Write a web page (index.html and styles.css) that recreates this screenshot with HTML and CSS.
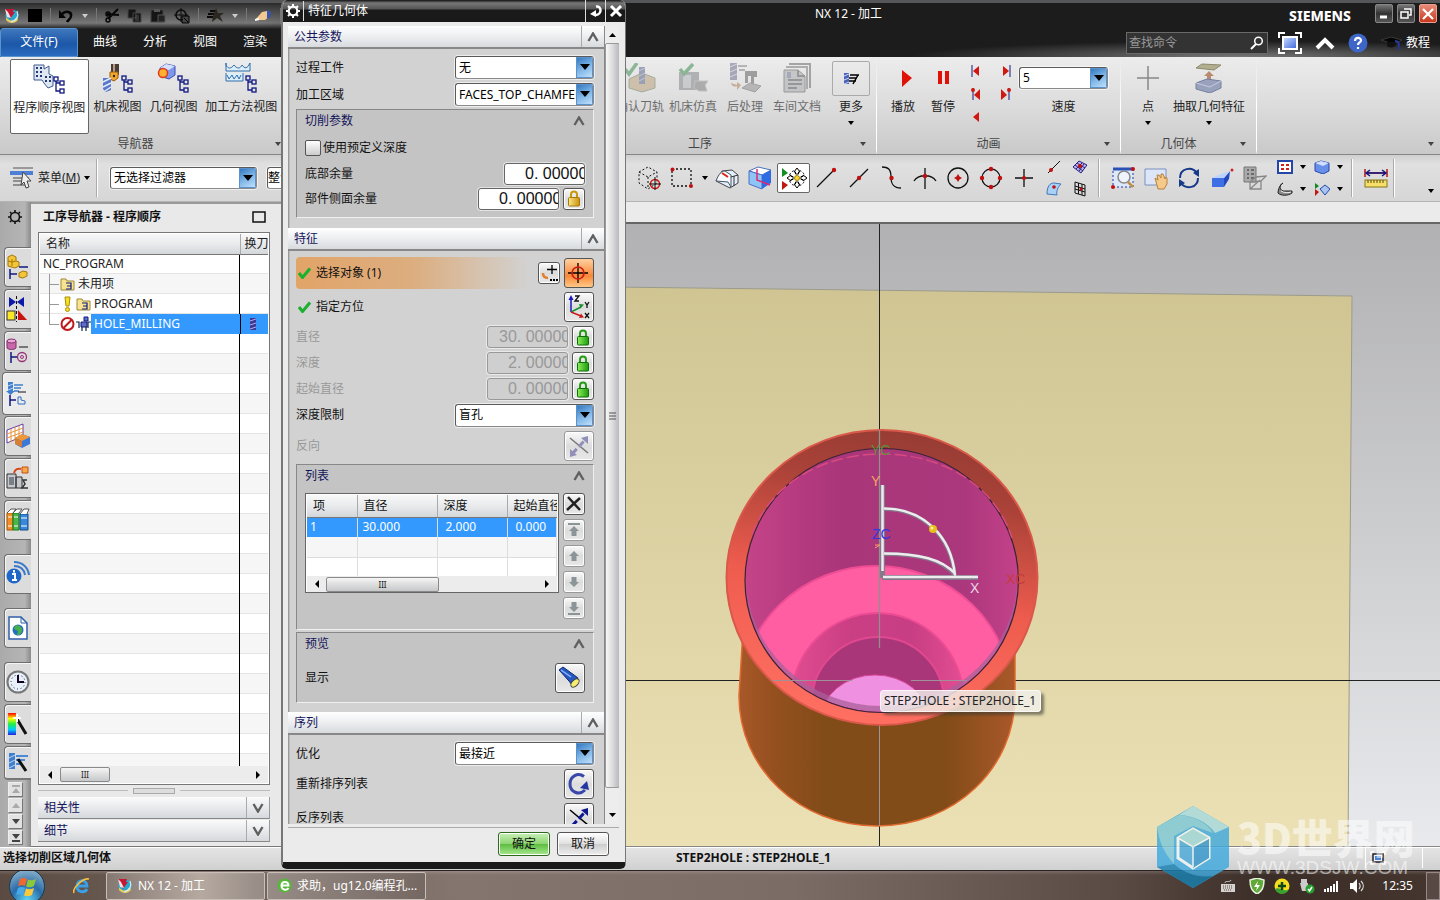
FILE: index.html
```html
<!DOCTYPE html>
<html lang="zh-CN">
<head>
<meta charset="utf-8">
<title>NX 12 - 加工</title>
<link rel="stylesheet" href="styles.css">
</head>
<body>
<svg class="defs" aria-hidden="true">
  <defs>
    <linearGradient id="gBlue" x1="0" y1="0" x2="1" y2="1"><stop offset="0" stop-color="#cfe2ff"/><stop offset="1" stop-color="#3a62d8"/></linearGradient>
    <linearGradient id="gGold" x1="0" y1="0" x2="1" y2="0"><stop offset="0" stop-color="#fbe68a"/><stop offset="1" stop-color="#c8920c"/></linearGradient>
    <linearGradient id="gGreen" x1="0" y1="0" x2="1" y2="0"><stop offset="0" stop-color="#8df05a"/><stop offset="1" stop-color="#1d9a10"/></linearGradient>
    <linearGradient id="gRainbow" x1="0" y1="0" x2="0" y2="1"><stop offset="0" stop-color="#f00"/><stop offset=".25" stop-color="#ff0"/><stop offset=".5" stop-color="#2e4"/><stop offset=".75" stop-color="#0cf"/><stop offset="1" stop-color="#22d"/></linearGradient>
    <symbol id="tree" viewBox="0 0 12 18"><g fill="none" stroke="#101880" stroke-width="1.300"><rect x="1" y="1" width="4" height="4"/><path d="M3 5v10h4M3 7h4"/><rect x="7" y="5" width="4" height="4"/><rect x="7" y="13" width="4" height="4"/></g></symbol>
    <symbol id="up" viewBox="0 0 12 10"><path d="M1.500 9L6 1.500 10.500 9" fill="none" stroke="#606060" stroke-width="2.400"/></symbol>
    <symbol id="dn" viewBox="0 0 12 10"><path d="M1.500 1L6 8.500 10.500 1" fill="none" stroke="#606060" stroke-width="2.400"/></symbol>
    <symbol id="caret" viewBox="0 0 6 4"><path d="M0 0h6L3 4z"/></symbol>
    <symbol id="lock" viewBox="0 0 14 17"><path d="M4 8V4.500a3 3 0 0 1 6 0V8" fill="none" stroke="currentColor" stroke-width="2"/><rect x="1.500" y="7.500" width="11" height="8.500" rx="1" fill="url(#gGold)" stroke="#a87808"/></symbol>
    <symbol id="glock" viewBox="0 0 14 17"><path d="M4 8V4.500a3 3 0 0 1 6 0V8" fill="none" stroke="#259b18" stroke-width="2"/><rect x="1.500" y="7.500" width="11" height="8.500" rx="1" fill="url(#gGreen)" stroke="#0e7008"/></symbol>
    <symbol id="check" viewBox="0 0 13 12"><path d="M1 6l3.500 4.500L12 1.500" fill="none" stroke="#1cb030" stroke-width="3"/></symbol>
    <symbol id="folder" viewBox="0 0 15 13"><path d="M1 3V1h5l1 2h7v9H1z" fill="#f6e490" stroke="#a08838"/><path d="M6 5h5v6H6M7 8h4" fill="none" stroke="#101880" stroke-width="1.200"/></symbol>
    <symbol id="nx" viewBox="0 0 17 17"><circle cx="9" cy="9" r="6.500" fill="#27a8cf"/><path d="M3 10c3 5 9 4 11 0l1 3c-3 4-9 4-12 0z" fill="#e8c95c"/><path d="M14 4c2 5 0 9-6 11" fill="none" stroke="#d8ecf4" stroke-width="1.200"/><path d="M2 2l9 0-1 3 2 0-5 7z" fill="#c31835"/><path d="M2 2l3 3 3 6-4-1z" fill="#f0e0e4"/></symbol>
    <symbol id="cross" viewBox="0 0 22 22"><path d="M11 1v20M1 11h20" stroke="#000" stroke-width="1.300"/><circle cx="11" cy="11" r="6" fill="none" stroke="#d01c10" stroke-width="1.700"/></symbol>
    <symbol id="arrowup" viewBox="0 0 12 12"><path d="M6 1l5 5H8.500v5h-5V6H1z" fill="#8b9598"/></symbol>
  </defs>
</svg>

<div class="app">
<header class="top">
  <div class="titlebar">
    <div class="qat">
      <svg width="17" height="17"><use href="#nx"/></svg>
      <svg width="14" height="14"><rect width="14" height="13" fill="#000"/></svg>
      <i></i>
      <svg width="15" height="14"><path d="M3 5c4-4 10-2 9 2 0 3-3 4-4 6" fill="none" stroke="#050505" stroke-width="2.500"/><path d="M0 1v8h7z" fill="#050505"/></svg>
      <svg class="lite" width="6" height="4"><use href="#caret"/></svg>
      <i></i>
      <svg width="14" height="15"><path d="M3 11L13 1M2 6l12 1" stroke="#060606" stroke-width="2"/><circle cx="3" cy="12" r="2" fill="none" stroke="#060606" stroke-width="1.500"/><circle cx="3" cy="6" r="2" fill="none" stroke="#060606" stroke-width="1.500"/></svg>
      <svg width="15" height="15"><path d="M1 1h8v9H1zM6 5h8v9H6z" fill="#151515" stroke="#444"/><path d="M8 8h4M8 10h4M8 12h4" stroke="#555"/></svg>
      <svg width="16" height="15"><rect x="1" y="2" width="12" height="12" fill="#151515" stroke="#444"/><path d="M4 1h6v3H4z" fill="#555"/><path d="M8 7h7v7H8z" fill="#222" stroke="#555"/></svg>
      <svg width="16" height="16"><circle cx="7" cy="7" r="5" fill="none" stroke="#0a0a0a" stroke-width="1.500"/><path d="M7 0v14M0 7h14" stroke="#0a0a0a"/><path d="M8 8h7v7H8z" fill="#444" stroke="#000"/><path d="M10 10l4 4" stroke="#000"/></svg>
      <i></i>
      <svg width="17" height="15"><path d="M3 3h7M1 6h7M0 9h6" stroke="#0a0a0a" stroke-width="2"/><path d="M9 0l2 5 6 0-4 3 3 6-6-4-5 4 1-6z" fill="#2a2820"/></svg>
      <svg class="lite" width="6" height="4"><use href="#caret"/></svg>
      <i></i>
      <svg width="17" height="12"><path d="M0 10l7-8 5-1 3 5-5 4z" fill="#f1c88d"/><path d="M12 0l4 2-1 6-3 0z" fill="#3456b0"/><path d="M0 10l4-1" stroke="#fff" stroke-width="2"/></svg>
      <i></i>
      <svg width="14" height="14"><path d="M0 1h14v12H0z" fill="#080808"/><path d="M4 4h6v6H4zM7 1v12" fill="none" stroke="#333"/></svg>
    </div>
    <h1>NX 12 - 加工</h1>
    <strong class="brand">SIEMENS</strong>
    <div class="winbtns">
      <button aria-label="最小化"><svg width="12" height="12"><path d="M2 9h7" stroke="#fff" stroke-width="3"/></svg></button>
      <button aria-label="还原"><svg width="12" height="12"><path d="M4 1h7v6H9M1 4h7v6H1z" fill="none" stroke="#fff" stroke-width="1.500"/></svg></button>
      <button class="close" aria-label="关闭"><svg width="12" height="12"><path d="M1 1l10 10M11 1L1 11" stroke="#fff" stroke-width="2.200"/></svg></button>
    </div>
  </div>
  <div class="tabrow">
    <nav><button class="file">文件(F)</button><button>曲线</button><button>分析</button><button>视图</button><button>渲染</button></nav>
    <div class="search"><input type="text" placeholder="查找命令" aria-label="查找命令"><svg width="14" height="14"><circle cx="8.500" cy="5" r="3.800" fill="none" stroke="#fff" stroke-width="1.500"/><path d="M6 8l-5 5" stroke="#fff" stroke-width="2"/></svg></div>
    <svg class="hi" width="24" height="22"><path d="M1 6V1h6M17 1h6v5M23 16v5h-6M7 21H1v-5" fill="none" stroke="#fff" stroke-width="2"/><rect x="5" y="5" width="14" height="12" fill="url(#gBlue)" stroke="#fff" stroke-width="2"/></svg>
    <svg class="hi" width="20" height="14"><path d="M2 12l8-8 8 8" fill="none" stroke="#fff" stroke-width="4"/></svg>
    <svg class="hi" width="20" height="20"><circle cx="10" cy="10" r="9.500" fill="#3e66c9"/><path d="M7 8c0-4 6-4 6-.5 0 2-3 2-3 4.500M10 14v2" fill="none" stroke="#fff" stroke-width="2.200"/></svg>
    <button class="tutor"><svg width="22" height="16"><path d="M0 5l10-3 11 3-9 4z" fill="#050505" stroke="#3a3a3a"/><path d="M6 7v4c2 2 7 2 9-1V7" fill="#111"/><path d="M14 6c4 0 5 3 3 9" fill="none" stroke="#23399a" stroke-width="2"/></svg>教程</button>
  </div>
</header>

<section class="ribbon">
  <div class="group g-nav">
    <div class="tools">
      <button class="tool sel"><svg width="32" height="30"><path d="M1 1h10v4l5-3v8l4 2v10l-5 2-4-5-2-3H1z" fill="#dfe8f2" stroke="#3f5a90"/><path d="M3 4h2M7 4h2M3 8h2M7 8h2M3 12h2M7 12h2M12 13h2M16 13h2M12 17h2M16 17h2" stroke="#223a70" stroke-width="2"/><use href="#tree" x="20" y="12" width="12" height="18"/></svg>程序顺序视图</button>
      <button class="tool w56"><svg width="32" height="30"><path d="M9 1h8v10l-3 5H9z" fill="#4a3b34"/><path d="M11 1h2v10h-2z" fill="#b49a88"/><path d="M8 9h8v6l-4 3-4-2z" fill="#f0a830" stroke="#9a5a08"/><circle cx="12" cy="13" r="1.200" fill="#3a2408"/><path d="M1 15h8v12l-5 2-3-3z" fill="#5878c8"/><path d="M1 19l8-4M1 24l8-4M3 28l6-4" stroke="#e5ebff" stroke-width="1.500"/><use href="#tree" x="19" y="12" width="12" height="18"/></svg>机床视图</button>
      <button class="tool w56"><svg width="32" height="30"><path d="M3 5l6-4 9 2v9l-6 4-9-3z" fill="#7e97ea" stroke="#3b50b0"/><path d="M3 5l9 2 6-4-9-2z" fill="#d6e0ff"/><circle cx="6" cy="10" r="4.500" fill="#ffb030" stroke="#e03818" stroke-width="1.500"/><use href="#tree" x="20" y="12" width="12" height="18"/></svg>几何视图</button>
      <button class="tool w80"><svg width="32" height="30"><path d="M1 0v8h24V0c-3 6-5 6-8 2-2 4-5 4-8 0-3 4-6 4-8 0z" fill="#dceefa" stroke="#2d6ca8"/><path d="M1 10v8h17v-8M2 12l2 4 3-4 2 4 3-4 2 4 2-4" fill="#dceefa" stroke="#2d6ca8"/><use href="#tree" x="20" y="12" width="12" height="18"/></svg>加工方法视图</button>
    </div>
    <div class="cap"><span>导航器</span><svg width="6" height="4"><use href="#caret"/></svg></div>
  </div>
  <div class="group g-op">
    <div class="tools">
      <button class="tool w48 off"><svg width="32" height="30"><path d="M5 16l13-6 13 5v10l-13 4-13-4z" fill="#c0a884" stroke="#7a8a70"/><path d="M15 4h6v17h-6z" fill="#6a7396"/><path d="M15 8l6-3M15 13l6-3M15 18l6-3" stroke="#aab0c8"/><path d="M1 6l4 5L13 0" fill="none" stroke="#4f9560" stroke-width="3.500"/></svg>确认刀轨</button>
      <button class="tool w58 off"><svg width="32" height="30"><path d="M2 9h20v18H2z" fill="#8b8f93"/><path d="M6 12h8v13H6z" fill="#b8bcc0"/><path d="M18 18h13l-3 4 2 6h-8l-5-3z" fill="#888" stroke="#aaa"/><path d="M3 6l4 5 9-10" fill="none" stroke="#4f9560" stroke-width="3.500"/></svg>机床仿真</button>
      <button class="tool w46 off"><svg width="32" height="30"><path d="M1 0h7v17H1z" fill="#7a7e98"/><path d="M1 4l7-3M1 9l7-3M1 14l7-3" stroke="#c8cad8"/><path d="M9 3h9M10 7h6" stroke="#777" stroke-width="1.500"/><path d="M16 8h12v6h-3v8l-3-1V13h-3v7h-3z" fill="#6e6e6e"/><path d="M13 25l8-5 11 3-6 6z" fill="#999" stroke="#777"/><path d="M2 20c1 4 4 4 6 3v4l4-5-4-3v3z" fill="#b38a68"/></svg>后处理</button>
      <button class="tool w58 off"><svg width="32" height="30"><path d="M8 1h21v24" fill="none" stroke="#777" stroke-width="2"/><path d="M5 4h21v22" fill="none" stroke="#888" stroke-width="2"/><path d="M3 7h14l7 6v16H3z" fill="#aeb1b5" stroke="#686868"/><path d="M17 7v6h7M7 17h14M7 21h14M7 25h9" fill="none" stroke="#666" stroke-width="2"/><path d="M6 9h4v6H6z" fill="#7a80a0"/></svg>车间文档</button>
      <button class="tool more"><span><svg width="16" height="14"><path d="M1 1h5v11H1z" fill="#4a62b8"/><path d="M1 4l5-2M1 8l5-2M1 12l5-2" stroke="#cdd8ff"/><path d="M7 3h9M6 6h8M6 9h7M10 12l5-9" stroke="#000" stroke-width="1.500"/></svg></span>更多<svg width="6" height="4"><use href="#caret"/></svg></button>
    </div>
    <div class="cap"><span>工序</span><svg width="6" height="4"><use href="#caret"/></svg></div>
  </div>
  <div class="group g-anim">
    <div class="tools">
      <button class="tool w40"><svg width="32" height="30"><path d="M15 7l10 8-10 9z" fill="#e01208"/></svg>播放</button>
      <button class="tool w40"><svg width="32" height="30"><path d="M11 8h4v13h-4zM18 8h4v13h-4z" fill="#e01208"/></svg>暂停</button>
      <div class="steps">
        <button aria-label="首步"><svg width="12" height="12"><path d="M2 0v12" stroke="#101880"/><path d="M9 1v10L3 6z" fill="#d01810"/></svg></button>
        <button aria-label="末步"><svg width="12" height="12"><path d="M10 0v12" stroke="#101880"/><path d="M3 1v10l6-5z" fill="#d01810"/></svg></button>
        <button aria-label="上一停止"><svg width="12" height="14"><path d="M3 1v12" stroke="#101880"/><circle cx="3" cy="3" r="2" fill="#d01810"/><path d="M10 2v11L4 8z" fill="#d01810"/></svg></button>
        <button aria-label="下一停止"><svg width="12" height="14"><path d="M9 1v12" stroke="#101880"/><circle cx="9" cy="3" r="2" fill="#d01810"/><path d="M1 2v11l6-5z" fill="#d01810"/></svg></button>
        <button aria-label="后退"><svg width="12" height="12"><path d="M9 1v10L3 6z" fill="#d01810"/></svg></button>
      </div>
      <div class="speed"><span class="combo"><select id="speed"><option>5</option></select><b><svg width="10" height="7"><path d="M0 0h10L5 6z"/></svg></b></span><label for="speed">速度</label></div>
    </div>
    <div class="cap"><span>动画</span><svg width="6" height="4"><use href="#caret"/></svg></div>
  </div>
  <div class="group g-geo">
    <div class="tools">
      <button class="tool w32"><svg width="32" height="30"><path d="M16 3v24M5 15h22" stroke="#888" stroke-width="1.500"/></svg>点<svg width="6" height="4"><use href="#caret"/></svg></button>
      <button class="tool w80"><svg width="32" height="30"><path d="M3 5l6-4 19 1-7 5z" fill="#b3ae8e" stroke="#8c8970"/><path d="M16 8l5 5h-3v6h-4v-6h-3z" fill="#b98a70"/><path d="M3 20l11-4 14 2v7l-11 5-14-4z" fill="#99a2bc" stroke="#7580a0"/><path d="M3 20l14 4 11-6" fill="none" stroke="#c5cbdd"/></svg>抽取几何特征<svg width="6" height="4"><use href="#caret"/></svg></button>
    </div>
    <div class="cap"><span>几何体</span><svg width="6" height="4"><use href="#caret"/></svg></div>
  </div>
  <div class="group g-rest"><div class="tools"></div><div class="cap"><span></span><svg width="6" height="4"><use href="#caret"/></svg></div></div>
</section>

<section class="bar">
  <div class="bar-left">
    <button class="menu"><svg width="26" height="22"><path d="M4 1h20" stroke="#555"/><path d="M1 4h23v4H1z" fill="#4d7fd6"/><path d="M4 11h16M4 14h12M4 18h14" stroke="#777" stroke-width="1.500"/><path d="M14 5l8 9h-4l2 6-3 1-2-6-3 3z" fill="#eee" stroke="#444"/></svg>菜单(<u>M</u>)<svg width="6" height="4"><use href="#caret"/></svg></button>
    <i></i>
    <span class="combo filter"><select aria-label="选择过滤器"><option>无选择过滤器</option></select><b><svg width="10" height="7"><path d="M0 0h10L5 6z"/></svg></b></span>
    <span class="combo scope"><select aria-label="选择范围"><option>整个装配</option></select></span>
  </div>
  <div class="icons">
    <svg width="24" height="24"><path d="M2 6l9-5 9 5v11l-9 6-9-6zM2 6l9 5 9-5M11 11v11" fill="none" stroke="#111" stroke-dasharray="2 2"/><circle cx="18" cy="18" r="4.500" fill="none" stroke="#d01810" stroke-width="1.500"/><path d="M18 11v13M12 18h12" stroke="#111"/></svg>
    <svg width="24" height="24"><path d="M2 3h19v17H2z" fill="none" stroke="#111" stroke-width="1.300" stroke-dasharray="2 2"/><circle cx="2.500" cy="3.500" r="2" fill="#c01010"/><circle cx="21" cy="20" r="2" fill="#c01010"/></svg>
    <svg class="cr" width="6" height="4"><use href="#caret"/></svg>
    <svg width="24" height="24"><path d="M1 15L7 5l10-1 6 5v8l-8 5z" fill="#e5eefb" stroke="#444"/><path d="M1 15c3-8 6-10 9-10l6 4v12l-3-5z" fill="#f8fbff" stroke="#456"/><path d="M16 11l7-2M19 10v10" stroke="#333"/><path d="M7 7l6 4" stroke="#e02010" stroke-width="2"/></svg>
    <svg width="24" height="24"><path d="M1 5l9-4 13 3-9 5z" fill="#fff" stroke="#4a70c0"/><path d="M1 5l13 4v14L1 18z" fill="#8fc4f6" stroke="#4a70c0"/><path d="M14 9l9-5v13l-9 6z" fill="#2f6ce4"/><path d="M9 3v11l13 5" fill="none" stroke="#e02878" stroke-width="1.500"/></svg>
    <button class="on" aria-label="捕捉点"><svg width="28" height="26"><path d="M2 3l6 5-6 4z" fill="#109020"/><path d="M2 16l6 4-6 5z" fill="#c01810"/><circle cx="17" cy="13" r="8" fill="none" stroke="#000" stroke-dasharray="2 2"/><circle cx="17" cy="13" r="2.500" fill="#f8d838" stroke="#a88000"/><path d="M17 3l3 4h-1.500v2h-3V7H14zM17 23l3-4h-1.500v-2h-3v2H14zM7 13l4-3v1.500h2v3h-2V16zM27 13l-4-3v1.500h-2v3h2V16z" fill="#fff" stroke="#000"/></svg></button>
    <svg width="24" height="24"><path d="M3 21L20 4" stroke="#111" stroke-width="1.300"/><circle cx="20" cy="4" r="2.200" fill="#c01010"/></svg>
    <svg width="24" height="24"><path d="M3 21L21 3" stroke="#111" stroke-width="1.300"/><circle cx="12" cy="12" r="2.200" fill="#c01010"/></svg>
    <svg width="24" height="24"><path d="M2 1c6 0 9 2 9 10s3 11 10 11" fill="none" stroke="#111" stroke-width="1.300"/><circle cx="11.500" cy="12" r="2.200" fill="#c01010"/></svg>
    <svg width="24" height="24"><path d="M1 15c4-7 18-7 22 0M12 2v21" fill="none" stroke="#111" stroke-width="1.300"/><circle cx="12" cy="10" r="2.200" fill="#c01010"/></svg>
    <svg width="24" height="24"><circle cx="12" cy="12" r="10" fill="none" stroke="#111" stroke-width="1.300"/><path d="M12 8l1.500 2.500L16 12l-2.500 1.500L12 16l-1.500-2.500L8 12l2.500-1.500z" fill="#c01010"/></svg>
    <svg width="24" height="24"><circle cx="12" cy="12" r="9" fill="none" stroke="#111" stroke-width="1.300"/><g fill="#c01010"><circle cx="12" cy="3" r="2.200"/><circle cx="21" cy="12" r="2.200"/><circle cx="12" cy="21" r="2.200"/><circle cx="3" cy="12" r="2.200"/></g></svg>
    <svg width="24" height="24"><path d="M12 3v18M3 12h18" stroke="#111" stroke-width="1.300"/><circle cx="12" cy="12" r="2" fill="#c01010"/></svg>
    <div class="quad">
      <svg width="16" height="14"><path d="M2 13L14 1" stroke="#111"/><circle cx="5" cy="10" r="2" fill="#c01010"/></svg>
      <svg width="16" height="14"><path d="M1 7l6-6 8 4-6 8z" fill="#b8b0e8" stroke="#2c2484"/><path d="M3 5l8 6M5 3l8 5M4 9l6-6M7 11l5-7" stroke="#2c2484"/><circle cx="8" cy="6" r="2" fill="#c01010"/></svg>
      <svg width="16" height="16"><path d="M1 13C1 5 4 2 8 2l7 1c-3 3-5 7-4 11z" fill="#a9d1f5" stroke="#4178b8"/><circle cx="8" cy="6" r="1.800" fill="#c01010"/></svg>
      <svg width="14" height="16"><path d="M2 1l10 3v11L2 12zM5.500 2v11M9 3v11M2 5l10 3M2 8l10 3" fill="none" stroke="#111"/><circle cx="8" cy="8" r="1.500" fill="#c01010"/></svg>
    </div>
    <i></i>
    <svg width="24" height="24"><rect x="2" y="3" width="20" height="18" fill="#dce9fb" stroke="#2338a8" stroke-dasharray="2 2"/><path d="M2 3h20" stroke="#2b50b8" stroke-width="3"/><circle cx="13" cy="11" r="6" fill="#f0f4fc" stroke="#888" stroke-width="1.500"/><path d="M17 16l5 5" stroke="#c09040" stroke-width="2.500"/><circle cx="2" cy="21" r="2" fill="#c01010"/><circle cx="22" cy="3" r="2" fill="#c01010"/></svg>
    <svg width="24" height="24"><path d="M1 3h21v16H1z" fill="#dce6f8" stroke="#7a90c0"/><path d="M11 12l3 2-1-5 2 0 2 3 0-4 2 0 2 5 1-2 1 1v6l-3 5h-6z" fill="#f5c98a" stroke="#b88038"/></svg>
    <svg width="24" height="24"><g fill="none" stroke="#16398a" stroke-width="2"><path d="M3 12c0-10 12-12 17-5M21 12c0 10-12 12-17 5"/></g><path d="M22 3v8l-6-4zM2 21v-8l6 4z" fill="#16398a"/></svg>
    <svg width="24" height="24"><path d="M2 12l12 0v9l-12 0z" fill="#3f6fe4"/><path d="M14 12l6-7-1 8-5 8z" fill="#2448c0"/><path d="M2 12l12 0 6-7-9 3z" fill="#bdd2ff"/><circle cx="22" cy="4" r="1.500" fill="#d02020"/></svg>
    <svg width="24" height="24"><path d="M1 1h12v15H1z" fill="#aaa" stroke="#777"/><path d="M4 4h2M8 4h3M4 8h2M8 8h3M4 12h2M8 12h3" stroke="#555" stroke-width="1.500"/><path d="M7 16l6-5 10-1-5 5v8H7zM7 16l11-1M7 23l10-9" fill="none" stroke="#888" stroke-width="1.300"/></svg>
    <div class="quad wide">
      <svg width="16" height="14"><rect x="1" y="1" width="14" height="12" fill="#fff" stroke="#2446a8" stroke-width="2"/><path d="M4 4h3v2H4zM9 4h3v2H9zM4 8h3v2H4zM9 8h3v2H9z" fill="#d02018"/></svg>
      <svg class="cr" width="6" height="4"><use href="#caret"/></svg>
      <svg width="16" height="14"><path d="M1 3l6-2 8 2v8l-6 3-8-3z" fill="#6890e8" stroke="#2446a8"/><path d="M1 3l8 3 6-3-8-2z" fill="#d0dfff"/></svg>
      <svg class="cr" width="6" height="4"><use href="#caret"/></svg>
      <svg width="16" height="14"><path d="M6 1c-4 2-4 6 0 8h9v2c-4 3-11 3-14 0 0-4 2-8 5-10z" fill="#888" stroke="#222"/><path d="M4 9c3 2 8 2 10 1" stroke="#eee" fill="none"/></svg>
      <svg class="cr" width="6" height="4"><use href="#caret"/></svg>
      <svg width="16" height="14"><path d="M1 1l4 3-4 3z" fill="#108a28"/><path d="M1 7l4 3-4 4z" fill="#c01810"/><path d="M6 7l5-4 5 4-5 6z" fill="#a8c4f0" stroke="#2446a8"/></svg>
      <svg class="cr" width="6" height="4"><use href="#caret"/></svg>
    </div>
    <i></i>
    <svg width="24" height="24"><path d="M1 3v8M23 3v8M2 7h20" stroke="#c01010" stroke-width="1.500"/><path d="M3 7h18M6 4L2 7l4 3M18 4l4 3-4 3" fill="none" stroke="#101880" stroke-width="1.500"/><rect x="1" y="14" width="22" height="7" fill="#f6e06a" stroke="#8a7418"/><path d="M4 14v3M7 14v3M10 14v3M13 14v3M16 14v3M19 14v3" stroke="#5a4a08"/></svg>
    <i></i>
    <svg class="cr last" width="6" height="4"><use href="#caret"/></svg>
  </div>
</section>

<main class="work">
  <aside class="rail">
    <svg class="gear" width="16" height="16"><circle cx="8" cy="8" r="4.500" fill="none" stroke="#111" stroke-width="1.600"/><path d="M8 1v2.500M8 12.500V15M1 8h2.500M12.500 8H15M3 3l1.700 1.700M11.300 11.300L13 13M13 3l-1.700 1.700M4.700 11.300L3 13" stroke="#111" stroke-width="1.600"/></svg>
    <button aria-label="装配导航器"><svg width="24" height="26"><path d="M2 3l4-2 4 2v4l3 1v4l-4 2-7-2z" fill="#f3c53a" stroke="#a67808"/><path d="M6 5v7M2 7l4 1 4-1" fill="none" stroke="#a67808"/><path d="M4 15v10M4 20h7M13 13h9" stroke="#101880" stroke-width="1.500"/><path d="M13 19l4-2 4 1v4l-4 2-4-1z" fill="#f3c53a" stroke="#a67808"/></svg></button>
    <button aria-label="约束导航器"><svg width="24" height="26"><path d="M3 1l7 5-7 5zM18 1l-7 5 7 5z" fill="#0c18a8"/><rect x="1" y="15" width="8" height="9" fill="#fbe628" stroke="#333"/><path d="M12 14l9 10h-9z" fill="#c81410"/><path d="M10.500 0v26" stroke="#111" stroke-dasharray="3 2"/></svg></button>
    <button aria-label="部件导航器"><svg width="24" height="26"><path d="M1 3v7c2 2 7 2 9 0V3" fill="#c868a8" stroke="#803070"/><ellipse cx="5.500" cy="3" rx="4.500" ry="2" fill="#eaa8d4" stroke="#803070"/><path d="M5 14v11M5 19h6" stroke="#101880" stroke-width="1.500"/><path d="M13 9h9" stroke="#111"/><circle cx="16" cy="19" r="4.500" fill="none" stroke="#983078" stroke-width="1.300"/><circle cx="16" cy="19" r="1.500" fill="none" stroke="#983078"/></svg></button>
    <button class="cur" aria-label="工序导航器"><svg width="24" height="26"><path d="M3 1h5v9H3zM1 10h9l-4.500 4z" fill="#3f7fd0"/><path d="M3 5l5-2M3 9l5-2" stroke="#bcd6f8"/><path d="M9 4h9M9 7h7M9 10h5" stroke="#3f7fd0" stroke-width="1.500"/><path d="M5 14v11M5 19h6" stroke="#101880" stroke-width="1.500"/><path d="M13 11h8" stroke="#111"/><path d="M13 16v7h7v-3l-4-1v-3z" fill="none" stroke="#2f6cc0"/></svg></button>
    <button aria-label="机床导航器"><svg width="24" height="26"><path d="M1 7L17 1v12L1 20z" fill="#fff" stroke="#6a3da0"/><path d="M1 11l16-6M1 15l16-6M5 6v13M9 4v13M13 3v12" stroke="#e8943a"/><path d="M9 15l7-4 8 3v7l-8 4-7-4z" fill="#3c78d8"/><path d="M9 15l7-4 8 3-8 4z" fill="#f09838"/><path d="M9 15l7 3v6l-7-3z" fill="#d88030"/></svg></button>
    <button aria-label="加工特征"><svg width="24" height="26"><path d="M1 9h9v14H1zM10 12h6v11h-6z" fill="#c5c8cc" stroke="#333"/><path d="M3 12h5v8H3z" fill="#7a8088"/><path d="M16 2h6v6h-6z" fill="#f8a848" stroke="#c05010"/><path d="M8 8c1-4 4-5 7-4" fill="none" stroke="#d84818" stroke-width="2"/><path d="M21 15h-4l2 4-3 4h6" fill="none" stroke="#333" stroke-width="1.500"/></svg></button>
    <button aria-label="重用库"><svg width="24" height="26"><path d="M1 6h6v17H1z" fill="#f09028" stroke="#a85808"/><path d="M7 6h6v17H7z" fill="#48b848" stroke="#187818"/><path d="M14 7h8v16h-8z" fill="#3888d8" stroke="#144888"/><path d="M1 6l4-4h5L7 6M7 6l4-4h5l-3 4M14 7l4-5h5l-2 5" fill="#fff" stroke="#555"/><path d="M2 10h4M8 10h4M15 11h6M2 19h4M8 19h4M15 19h6" stroke="#fff"/></svg></button>
    <button class="gap" aria-label="信息"><svg width="24" height="26"><circle cx="8" cy="15" r="7.500" fill="#1f68c8"/><path d="M6 13h3v6M6 19h5M8 9v2.500" fill="none" stroke="#fff" stroke-width="2"/><path d="M8 5c6 0 10 3 11 9M8 1c8 0 14 5 15 13" fill="none" stroke="#3a78c8" stroke-width="2"/></svg></button>
    <button class="gap" aria-label="网页"><svg width="24" height="26"><path d="M3 2h12l6 6v16H3z" fill="#fff" stroke="#2f5fa8" stroke-width="1.500"/><path d="M15 2v6h6" fill="none" stroke="#2f5fa8"/><circle cx="12" cy="15" r="5.500" fill="#2470c0"/><path d="M9 11c3-2 7 1 7 4s-3 6-5 5l1-4-4-2z" fill="#48b048"/></svg></button>
    <button class="gap" aria-label="历史记录"><svg width="24" height="26"><circle cx="12" cy="13" r="10.500" fill="#e8f0fa" stroke="#777" stroke-width="2"/><circle cx="12" cy="13" r="7" fill="none" stroke="#223" stroke-dasharray="1 2.650"/><path d="M12 6v7h6" fill="none" stroke="#102" stroke-width="2"/></svg></button>
    <button aria-label="角色"><svg width="24" height="26"><rect x="2" y="2" width="8" height="22" fill="url(#gRainbow)"/><path d="M11 8l9 15" stroke="#111" stroke-width="3"/><path d="M11 3v8M7 7h8" stroke="#fff" stroke-width="2"/></svg></button>
    <button class="cut" aria-label="加工向导"><svg width="24" height="24"><path d="M3 2h6v16H3z" fill="#3f7fd0"/><path d="M3 7l6-3M3 12l6-3M3 17l6-3" stroke="#bcd6f8"/><path d="M10 5h12M10 9h9M10 13h6" stroke="#4a88d8" stroke-width="2"/><path d="M12 8l8 12" stroke="#111" stroke-width="3"/></svg></button>
    <div class="pager">
      <button aria-label="顶部"><svg width="10" height="9"><path d="M1 1h8" stroke="#aaa" stroke-width="2"/><path d="M5 3l4 5H1z" fill="#aaa"/></svg></button>
      <button aria-label="上"><svg width="10" height="9"><path d="M5 2l4 5H1z" fill="#aaa"/></svg></button>
      <button aria-label="下"><svg width="10" height="9"><path d="M5 7l4-5H1z" fill="#444"/></svg></button>
      <button aria-label="底部"><svg width="10" height="9"><path d="M1 8h8" stroke="#444" stroke-width="2"/><path d="M5 6l4-5H1z" fill="#444"/></svg></button>
    </div>
  </aside>
  <section class="navp">
    <div class="navhead"><h2>工序导航器 - 程序顺序</h2><svg width="14" height="12"><path d="M1 1h12v10H1z" fill="none" stroke="#111" stroke-width="1.500"/></svg></div>
    <div class="navbox">
      <div class="navgrid">
        <table>
          <thead><tr><th>名称</th><th>换刀</th></tr></thead>
          <tbody>
            <tr><td>NC_PROGRAM</td><td></td></tr>
            <tr><td class="in"><div><svg width="15" height="13"><use href="#folder"/></svg>未用项</div></td><td></td></tr>
            <tr><td class="in"><div><svg width="15" height="16"><path d="M5 1h5l-1 9H6z" fill="#f8e020" stroke="#a89008"/><circle cx="7.500" cy="13.500" r="2" fill="#f8e020" stroke="#a89008"/></svg><svg width="15" height="13"><use href="#folder"/></svg>PROGRAM</div></td><td></td></tr>
            <tr class="hl"><td class="in"><div><svg width="15" height="16"><circle cx="7.500" cy="8" r="6" fill="#fff" stroke="#c01818" stroke-width="2"/><path d="M3.500 12l8-8" stroke="#c01818" stroke-width="2"/></svg><svg width="15" height="16"><path d="M8 1h4v4H8zM5 6h6v5H5z" fill="#6070c8" stroke="#101880"/><path d="M0 6h3v6M15 6h-3v6M6 11v4M10 11v4" fill="none" stroke="#124" stroke-width="1.200"/></svg>HOLE_MILLING</div></td><td><svg width="8" height="14"><path d="M1 1h6v12H1z" fill="#3a3a98"/><path d="M1 4l6-2M1 8l6-2M1 12l6-2" stroke="#b8a8e0"/></svg></td></tr>
          </tbody>
        </table>
      </div>
      <div class="hscroll"><svg width="5" height="8"><path d="M5 0v8L1 4z"/></svg><span>III</span><svg width="5" height="8"><path d="M0 0v8l4-4z"/></svg></div>
    </div>
    <div class="split"><i></i></div>
    <button class="acc">相关性<svg width="12" height="10"><use href="#dn"/></svg></button>
    <button class="acc">细节<svg width="12" height="10"><use href="#dn"/></svg></button>
  </section>
  <section class="view">
    <div class="strip"></div>
    <div class="canvas">
      <svg class="scene" viewBox="281 224 1159 623" preserveAspectRatio="xMinYMin slice">
        <defs>
          <linearGradient id="bg" x1="0" y1="0" x2="0" y2="1"><stop offset="0" stop-color="#b1b1b3"/><stop offset="1" stop-color="#e9eaed"/></linearGradient>
          <linearGradient id="plate" x1="0" y1="0" x2="0" y2="1"><stop offset="0" stop-color="#cfc492"/><stop offset="1" stop-color="#ece1b5"/></linearGradient>
          <linearGradient id="cyl" x1="0" y1="0" x2="1" y2="0"><stop offset="0" stop-color="#a85828"/><stop offset=".12" stop-color="#965020"/><stop offset=".3" stop-color="#824c18"/><stop offset=".75" stop-color="#824c18"/><stop offset="1" stop-color="#aa582a"/></linearGradient>
          <linearGradient id="rim" x1=".6" y1="0" x2=".4" y2="1"><stop offset="0" stop-color="#963c34"/><stop offset=".2" stop-color="#aa4238"/><stop offset=".55" stop-color="#ee5c4e"/><stop offset="1" stop-color="#ff7062"/></linearGradient>
          <linearGradient id="wall" x1="0" y1="0" x2="1" y2="0"><stop offset="0" stop-color="#c54488"/><stop offset=".2" stop-color="#b53a80"/><stop offset=".35" stop-color="#aa367a"/><stop offset=".8" stop-color="#ab377c"/><stop offset="1" stop-color="#c4428a"/></linearGradient>
          <linearGradient id="ring2" x1="0" y1="0" x2="1" y2="0"><stop offset="0" stop-color="#e04c90"/><stop offset=".35" stop-color="#ca3e84"/><stop offset=".7" stop-color="#c83e84"/><stop offset="1" stop-color="#e34d92"/></linearGradient>
          <clipPath id="hole"><ellipse cx="881.700" cy="580.500" rx="136" ry="131"/></clipPath>
        </defs>
        <rect x="281" y="224" width="1159" height="623" fill="url(#bg)"/>
        <path d="M281 283L1352 296l-4 551H281z" fill="url(#plate)" stroke="#9b9b8c"/>
        <path d="M879.500 224v623M281 680.500h1159" stroke="#222"/>
        <path d="M743 630l-4 66c0 72 60 130 138 130s138-58 138-130V630z" fill="url(#cyl)" stroke="#e06a30" stroke-width="1.500"/>
        <path d="M879.500 720v106" stroke="#999"/>
        <ellipse cx="882" cy="577.500" rx="155.500" ry="147.500" fill="url(#rim)" stroke="#d9584a" stroke-width="2"/>
        <ellipse cx="881.700" cy="580.500" rx="136.500" ry="132" fill="url(#wall)"/>
        <g clip-path="url(#hole)">
          <ellipse cx="876" cy="697" rx="136" ry="131" fill="#ff5fa2" stroke="#ee4d96" stroke-width="2"/>
          <ellipse cx="877.500" cy="700" rx="86" ry="87" fill="url(#ring2)" stroke="#ec4c94" stroke-width="2"/>
          <ellipse cx="878" cy="702" rx="66" ry="65" fill="#aa367a" stroke="#e04890" stroke-width="2"/>
          <ellipse cx="875" cy="720" rx="54" ry="45" fill="#f090e0" stroke="#d84898"/>
          <path fill-rule="evenodd" fill="#a8609a" fill-opacity=".75" d="M744 580.500a137.700 133 0 1 0 275.400 0a137.700 133 0 1 0-275.400 0zM746 576a135.700 130 0 1 0 271.400 0a135.700 130 0 1 0-271.400 0z"/>
        </g>
        <ellipse cx="881.700" cy="580.500" rx="136.700" ry="132" fill="none" stroke="#3a2338" stroke-width="1.200"/>
        <path d="M752 535C768 488 818 454 882 454s114 34 130 84" fill="none" stroke="#d84a80" stroke-width="1.500" stroke-dasharray="12 4"/>
        <path d="M879.500 430v218" stroke="#909090" stroke-width="1.300"/>
        <path d="M772 680.500h80M911 680.500h56" stroke="#a09098"/>
        <g fill="none" stroke="#85788a" stroke-width="5"><path d="M882.500 485v93"/><path d="M882 577.500h96"/><path d="M884 509c38 0 67 26 71 68M884 554c36 0 58 6 71 21" stroke-width="4"/></g>
        <g fill="none" stroke="#eeecef" stroke-width="2.500"><path d="M882.500 485v86M883 577h95M884 508.500c38 0 67 26 71 67M884 553.500c36 0 58 6 71 20"/></g>
        <circle cx="933" cy="529" r="4" fill="#e8bf1c"/><circle cx="932" cy="528" r="1.500" fill="#fff0a0"/>
        <g class="ax"><text x="871" y="486" fill="#f4a468">Y</text><text x="970" y="593" fill="#e9d5e5">X</text><text x="871" y="455" fill="#5d9038">YC</text><text x="872" y="539" fill="#3333e8">ZC</text><text x="1006" y="584" fill="#c33c3c">XC</text><path d="M875 545h5l-5 3" fill="none" stroke="#f4a468"/></g>
      </svg>
      <div class="tip">STEP2HOLE : STEP2HOLE_1</div>
    </div>
  </section>
</main>

<section class="dialog" role="dialog" aria-label="特征几何体">
  <div class="dtitle">
    <svg width="20" height="20"><circle cx="10" cy="10" r="4.300" fill="none" stroke="#fff" stroke-width="2.200"/><path d="M10 3v3M10 14v3M3 10h3M14 10h3M5 5l2 2M13 13l2 2M15 5l-2 2M7 13l-2 2" stroke="#fff" stroke-width="2"/></svg>
    <h2>特征几何体</h2>
    <button aria-label="重置"><svg width="14" height="14"><path d="M7 2.500c6-1 6 8 0 8.500" fill="none" stroke="#fff" stroke-width="2.500"/><path d="M1 10l6-4v7z" fill="#fff"/></svg></button>
    <button aria-label="关闭"><svg width="14" height="14"><path d="M2 2l10 10M12 2L2 12" stroke="#fff" stroke-width="3"/></svg></button>
  </div>
  <div class="dbody">
    <div class="dscroll">
      <div class="sects">
        <h3>公共参数<span><svg width="12" height="10"><use href="#up"/></svg></span></h3>
        <div class="sect">
          <div class="r27"><label for="ipw">过程工件</label><span class="combo"><select id="ipw"><option>无</option></select><b><svg width="10" height="7"><path d="M0 0h10L5 6z"/></svg></b></span></div>
          <div class="r27"><label for="area">加工区域</label><span class="combo"><select id="area"><option>FACES_TOP_CHAMFER</option></select><b><svg width="10" height="7"><path d="M0 0h10L5 6z"/></svg></b></span></div>
          <div class="sub">
            <h4>切削参数<svg width="12" height="10"><use href="#up"/></svg></h4>
            <div class="r26 low"><input type="checkbox" id="pre"><label for="pre">使用预定义深度</label></div>
            <div class="r25"><label for="floor">底部余量</label><input class="num" id="floor" type="text" value="0. 00000"></div>
            <div class="r25"><label for="wallst">部件侧面余量</label><input class="num" id="wallst" type="text" value="0. 00000"><button class="b22 gold" aria-label="锁定"><svg width="14" height="17"><use href="#lock"/></svg></button></div>
          </div>
        </div>
        <h3>特征<span><svg width="12" height="10"><use href="#up"/></svg></span></h3>
        <div class="sect feat">
          <div class="r32 pick"><svg width="13" height="12"><use href="#check"/></svg><label>选择对象 (1)</label><button class="b22" aria-label="添加"><svg width="18" height="18"><path d="M11 1v9M6 5.500h10" stroke="#000" stroke-width="1.300"/><path d="M2 9c0 4 2 5 5 5" fill="none" stroke="#e08030" stroke-width="2.500"/><path d="M9 16h8" stroke="#000" stroke-width="2" stroke-dasharray="2 1"/></svg></button><button class="b30 hot" aria-label="选择"><svg width="22" height="22"><use href="#cross"/></svg></button></div>
          <div class="r34"><svg width="13" height="12"><use href="#check"/></svg><label>指定方位</label><button class="b30" aria-label="坐标系"><svg width="26" height="26"><path d="M5 18V5" stroke="#1818c0" stroke-width="1.500"/><path d="M2.500 6L5 1l2.500 5z" fill="#1818c0"/><path d="M5 18l10-5" stroke="#189028" stroke-width="1.500"/><path d="M13 10l5 .5-3.500 4z" fill="#189028"/><path d="M5 18l10 4" stroke="#c81818" stroke-width="1.500"/><path d="M13 24l5-.5-3-4z" fill="#c81818"/><path d="M9 2h4l-4 5h4M19 8l2 3 2-3M21 11v3M19 19l4 5M23 19l-4 5" fill="none" stroke="#111" stroke-width="1.300"/></svg></button></div>
          <div class="r26 off"><label for="dia">直径</label><input class="num w" id="dia" type="text" value="30. 00000" disabled><button class="b22" aria-label="锁定直径"><svg width="14" height="17"><use href="#glock"/></svg></button></div>
          <div class="r26 off"><label for="dep">深度</label><input class="num" id="dep" type="text" value="2. 00000" disabled><button class="b22" aria-label="锁定深度"><svg width="14" height="17"><use href="#glock"/></svg></button></div>
          <div class="r26 off"><label for="sdia">起始直径</label><input class="num" id="sdia" type="text" value="0. 00000" disabled><button class="b22" aria-label="锁定起始直径"><svg width="14" height="17"><use href="#glock"/></svg></button></div>
          <div class="r26"><label for="lim">深度限制</label><span class="combo"><select id="lim"><option>盲孔</option></select><b><svg width="10" height="7"><path d="M0 0h10L5 6z"/></svg></b></span></div>
          <div class="r35 off"><label>反向</label><button class="b30 pale" aria-label="反向"><svg width="24" height="24"><path d="M3 4l18 15" stroke="#777" stroke-width="1.500"/><path d="M5 20L19 5" stroke="#9090b8" stroke-width="3" stroke-dasharray="7 3"/><path d="M21 2v8l-7-6zM3 23v-8l7 6z" fill="#9090b8"/></svg></button></div>
          <div class="sub">
            <h4>列表<svg width="12" height="10"><use href="#up"/></svg></h4>
            <div class="lst">
              <div class="lbox">
                <table>
                  <thead><tr><th>项</th><th>直径</th><th>深度</th><th>起始直径</th></tr></thead>
                  <tbody><tr class="hl"><td>1</td><td>30.000</td><td>2.000</td><td>0.000</td></tr><tr class="alt"><td></td><td></td><td></td><td></td></tr><tr><td></td><td></td><td></td><td></td></tr></tbody>
                </table>
                <div class="hscroll"><svg width="5" height="8"><path d="M5 0v8L1 4z"/></svg><span>III</span><svg width="5" height="8"><path d="M0 0v8l4-4z"/></svg></div>
              </div>
              <div class="ops">
                <button class="b22" aria-label="移除"><svg width="16" height="16"><path d="M2 1l12 13M14 2L1 14" stroke="#222" stroke-width="2.500"/></svg></button>
                <button class="b22 pale" aria-label="移至顶部"><svg width="12" height="14"><path d="M0 1h12" stroke="#8b9598" stroke-width="2"/><path d="M6 3l5 5H8.500v5h-5V8H1z" fill="#8b9598"/></svg></button>
                <button class="b22 pale" aria-label="上移"><svg width="12" height="12"><use href="#arrowup"/></svg></button>
                <button class="b22 pale" aria-label="下移"><svg width="12" height="12"><path d="M6 11l5-5H8.500V1h-5v5H1z" fill="#8b9598"/></svg></button>
                <button class="b22 pale" aria-label="移至底部"><svg width="12" height="14"><path d="M0 13h12" stroke="#8b9598" stroke-width="2"/><path d="M6 11l5-5H8.500V1h-5v5H1z" fill="#8b9598"/></svg></button>
              </div>
            </div>
          </div>
          <div class="sub prev">
            <h4>预览<svg width="12" height="10"><use href="#up"/></svg></h4>
            <div class="r44"><label>显示</label><button class="b30" aria-label="显示"><svg width="24" height="24"><path d="M1 4l4-3 11 8 4 3-6 7-3-4z" fill="#2458c0" stroke="#102a70"/><path d="M3 4l10 7" stroke="#90b8ff" stroke-width="1.500"/><ellipse cx="17" cy="17" rx="5" ry="3" transform="rotate(-45 17 17)" fill="#f6ec70" stroke="#444"/></svg></button></div>
          </div>
        </div>
        <h3>序列<span><svg width="12" height="10"><use href="#up"/></svg></span></h3>
        <div class="sect">
          <div class="r27"><label for="opt">优化</label><span class="combo"><select id="opt"><option>最接近</option></select><b><svg width="10" height="7"><path d="M0 0h10L5 6z"/></svg></b></span></div>
          <div class="r34"><label>重新排序列表</label><button class="b30" aria-label="重新排序列表"><svg width="24" height="24"><path d="M17 4.500C11 0 3 4 3 12s9 12 15 6" fill="none" stroke="#3848a8" stroke-width="3"/><path d="M20 9l2 9-9-2z" fill="#2434a0"/></svg></button></div>
          <div class="r34"><label>反序列表</label><button class="b30" aria-label="反序列表"><svg width="24" height="24"><path d="M3 4l18 15" stroke="#000" stroke-width="1.500"/><path d="M5 20L19 5" stroke="#101890" stroke-width="3" stroke-dasharray="7 3"/><path d="M21 2v8l-7-6z" fill="#101890"/></svg></button></div>
        </div>
      </div>
      <div class="vscroll"><svg width="7" height="5"><path d="M3.500 0L7 4H0z"/></svg><span><svg width="7" height="8"><path d="M0 1h7M0 4h7M0 7h7" stroke="#555"/></svg></span><svg width="7" height="5"><path d="M3.500 4L7 0H0z"/></svg></div>
    </div>
    <div class="acts"><button class="ok">确定</button><button>取消</button></div>
  </div>
</section>

<footer class="status"><b>选择切削区域几何体</b><b>STEP2HOLE : STEP2HOLE_1</b><span class="cells"><i></i><svg width="16" height="14"><path d="M1 4V1h3M12 1h3v3M15 10v3h-3M4 13H1v-3" fill="none" stroke="#fff" stroke-width="1.500"/><rect x="3" y="3" width="10" height="8" fill="#eef" stroke="#222" stroke-width="1.500"/><rect x="5" y="5" width="6" height="4" fill="#4a84d8"/></svg><i></i></span></footer>

<footer class="taskbar">
  <button class="orb" aria-label="开始"><svg width="38" height="30" viewBox="0 0 38 30"><defs><radialGradient id="orb" cx=".5" cy=".9" r=".9"><stop offset="0" stop-color="#5fd8f8"/><stop offset=".5" stop-color="#2a6ca8"/><stop offset="1" stop-color="#8eb4cc"/></radialGradient></defs><circle cx="19" cy="15.500" r="17.500" fill="url(#orb)" stroke="#17394f"/><path d="M12 8c2-1.500 5-1 7 0l-2 7c-2-1-5-1-7 .5z" fill="#f06830"/><path d="M20 8.500c2 1 5 1 8-.5l-2 7c-3 1.500-5 1.500-8 .5z" fill="#8cc83c"/><path d="M10 17c2-1.500 5-1 7 0l-2 7c-2-1-5-1-7 .500z" fill="#48a8e8"/><path d="M18 17.500c2 1 5 1 8-.5l-2 7c-3 1.500-5 1.500-8 .500z" fill="#fcc83c"/></svg></button>
  <button class="ie" aria-label="IE"><svg width="18" height="18"><path d="M14 12c-2 4-10 4-10-3s10-7 10 0H5" fill="none" stroke="#3aa0e8" stroke-width="2.800"/><path d="M1 16c-2-4 8-15 15-14" fill="none" stroke="#f0c040" stroke-width="1.600"/></svg></button>
  <button class="task act"><svg width="17" height="17"><use href="#nx"/></svg>NX 12 - 加工</button>
  <button class="task"><svg width="15" height="15"><circle cx="7.500" cy="7.500" r="7" fill="#55b838"/><path d="M11.500 10c-2 3-7 2-7-2.500s7-5 7 0H5" fill="none" stroke="#fff" stroke-width="2"/></svg>求助，ug12.0编程孔...</button>
  <div class="tray">
    <svg class="kb" width="16" height="14"><path d="M1 5h14v8H1z" fill="#d6d2d0"/><path d="M3 7h10M3 9h10M4 11h8" stroke="#5a4a44" stroke-dasharray="1 1"/><path d="M5 4c0-3 5 0 6-3" fill="none" stroke="#ccc"/></svg>
    <svg width="16" height="16"><path d="M8 0l7 2c0 8-2 11-7 14C3 13 1 10 1 2z" fill="#60a838" stroke="#e8f0e0" stroke-width="1.500"/><path d="M9 3L5 9h3l-1 4 4-6H8z" fill="#fff"/></svg>
    <svg width="16" height="16"><circle cx="8" cy="8" r="7.500" fill="#f5dd20"/><path d="M1 11a7.500 7.500 0 0 0 14 0C10 15 5 8 1 11z" fill="#38a030"/><path d="M8 4v8M4 8h8" stroke="#114810" stroke-width="2.500"/></svg>
    <svg width="16" height="16"><path d="M2 1h6v4H2zM1 5h8v8H3z" fill="#ccc"/><circle cx="11" cy="11" r="4.500" fill="#28a030"/><path d="M9 11l1.500 2L13 9" fill="none" stroke="#fff" stroke-width="1.500"/></svg>
    <svg width="16" height="12"><path d="M0 9h2v3H0zM3 8h2v4H3zM6 6h2v6H6zM9 4h2v8H9zM12 1h2v11h-2z" fill="#fff"/></svg>
    <svg width="16" height="14"><path d="M1 4h3l4-4v14l-4-4H1z" fill="#fff"/><path d="M10 4c1.500 2 1.500 4 0 6M12 2c3 3 3 7 0 10" fill="none" stroke="#ddd" stroke-width="1.200"/></svg>
    <time>12:35</time>
    <i></i>
  </div>
</footer>

<div class="wm" aria-hidden="true">
  <svg width="72" height="82" viewBox="0 0 72 82"><path d="M36 0l36 21v40L36 82 0 61V21z" fill="#3fa9dd"/><path d="M36 0l36 21-14 6C50 16 38 10 22 9z" fill="#a6dbe0"/><path d="M0 21L22 9c14 1 28 7 34 18L36 20 17 30v28C6 46 2 34 0 21z" fill="#7cc8d8"/><path d="M0 61l36 21 20-12c-14 2-28-2-39-12z" fill="#1780b0"/><path d="M21 32l15-9 16 9v20l-16 10-15-10z" fill="#4aa8d8" stroke="#f0f6f4" stroke-width="3"/><path d="M21 32l15 9 16-9-16-9z" fill="#9dd6da"/><path d="M36 41l16-9v20l-16 10z" fill="#3395cc"/><path d="M21 32l15 9 16-9M36 41v20" fill="none" stroke="#f0f6f4" stroke-width="1.500"/></svg>
  <p><strong>3D世界网</strong><span>WWW.3DSJW.COM</span></p>
</div>
</div>
</body>
</html>
```

FILE: styles.css
```css
* { box-sizing: border-box; }
body { margin: 0; font: 12px/16px "Noto Sans", "Noto Sans CJK SC", sans-serif; color: #222; }
button, select, input { font: inherit; color: inherit; margin: 0; }
button { border: 0; padding: 0; background: none; }
h1, h2, h3, h4, p { margin: 0; font-size: 12px; font-weight: 400; }
svg { flex: none; display: block; }
label { white-space: nowrap; }
.defs { position: absolute; width: 0; height: 0; }
.app { position: relative; height: 100vh; display: flex; flex-direction: column; overflow: hidden; background: #ebebeb; }

/* title bar and tabs */
.top { flex: none; background: radial-gradient(ellipse 330px 16px at 86% 100%, #777, transparent), linear-gradient(90deg, rgba(28,28,28,0), rgba(28,28,28,0) 260px, #1c1c1c 480px), linear-gradient(#2a2a2a 0, #3a3a3a 3px, #777 20px, #1c1c1c 26px); color: #fff; border-top: 3px solid #555658; }
.titlebar { display: flex; align-items: center; height: 25px; }
.qat { width: 815px; display: flex; align-items: center; gap: 8px; padding-left: 3px; }
.qat i { width: 1px; height: 16px; background: #777; }
.lite { fill: #ccc; }
.titlebar h1 { flex: 1; padding-bottom: 4px; }
.brand { font: 800 14px/16px "Noto Sans", sans-serif; margin-right: 24px; }
.winbtns { display: flex; gap: 4px; padding-right: 3px; margin-top: -4px; }
.winbtns button { width: 18px; height: 19px; display: grid; place-items: center; background: linear-gradient(#777, #333 50%, #555); border: 1px solid #888; border-radius: 2px; }
.winbtns .close { background: linear-gradient(#e88a78, #c83820); border-color: #e8a090; }
.tabrow { display: flex; align-items: center; height: 29px; }
.tabrow nav { display: flex; flex: 1; height: 29px; }
.tabrow nav button { width: 50px; padding-bottom: 2px; }
.tabrow nav .file { width: 78px; margin-right: 2px; background: linear-gradient(#3f78bd, #1c57a8 55%, #2b6cc0); border: 1px solid #5a92d0; border-radius: 3px 3px 0 0; }
.search { width: 142px; height: 22px; display: flex; align-items: center; background: #333; border: 1px solid #6a6a6a; padding-right: 3px; margin-right: 10px; }
.search input { flex: 1; min-width: 0; background: none; border: 0; padding: 0 2px; outline: 0; }
.search input::placeholder { color: #999; opacity: 1; }
.hi { margin-right: 13px; }
.tutor { display: flex; align-items: center; gap: 3px; padding-right: 10px; }

/* ribbon */
.ribbon { flex: none; display: flex; height: 98px; background: linear-gradient(#ececec, #dcdcdc 50%, #c9c9c9); border-bottom: 1px solid #858585; }
.group { display: flex; flex-direction: column; }
.tools { flex: 1; display: flex; align-items: flex-start; padding-top: 2px; }
.cap { height: 20px; display: flex; align-items: center; color: #444; padding-right: 10px; }
.cap span { flex: 1; text-align: center; padding-left: 10px; }
.cap svg { fill: #444; }
.g-nav { width: 281px; }
.g-nav .tools { padding-left: 10px; }
.g-nav .cap { padding-right: 0; }
.g-nav .cap span { padding: 0 4px 0 0; }
.g-op { margin-left: 243px; width: 353px; }
.g-op .tools { justify-content: flex-end; }
.g-op .cap span { padding-left: 16px; }
.g-anim { width: 244px; }
.g-anim .tools { padding-left: 6px; }
.g-anim .cap span { padding: 0 4px 0 0; }
.g-geo { width: 136px; }
.g-geo .tools { padding-left: 11px; }
.g-geo .cap span { padding: 0 4px 0 0; }
.g-geo .w80 { margin-left: 5px; }
.g-rest { flex: 1; }
.g-rest .cap { padding-right: 6px; }
.g-op, .g-anim, .g-geo { border-right: 1px solid #f8f8f8; border-image: linear-gradient(transparent, #fff 50%, #fff 95%, transparent) 1; }
.tool { display: flex; flex-direction: column; align-items: center; padding-top: 4px; gap: 6px; white-space: nowrap; }
.tool.sel { width: 79px; height: 75px; background: #fff; border: 1px solid #666; border-radius: 2px; }
.w32 { width: 32px; } .w40 { width: 40px; } .w46 { width: 46px; } .w48 { width: 48px; } .w56 { width: 56px; } .w58 { width: 58px; } .w80 { width: 80px; }
.sel + .w56 { margin-left: 1px; }
.tool.off { opacity: .6; }
.more { width: 50px; padding-top: 2px; }
.more span { width: 38px; height: 35px; border: 1px solid #aaa; border-radius: 2px; display: grid; place-items: center; margin-bottom: -3px; }
.steps { display: grid; grid-template-columns: 30px 19px; grid-auto-rows: 23px; padding-left: 7px; }
.steps button { display: flex; align-items: center; }
.speed { display: flex; flex-direction: column; align-items: center; gap: 10px; padding-top: 8px; }
.speed .combo { width: 89px; height: 22px; }

/* drop-downs */
.combo { position: relative; display: flex; width: 139px; height: 23px; border: 1px solid #5a5a5a; border-right-color: #8a8a8a; border-bottom-color: #8a8a8a; border-radius: 3px; background: #fff; box-shadow: 0 0 0 1px rgba(255,255,255,.6); overflow: hidden; }
.combo select { appearance: none; flex: 1; min-width: 0; border: 0; background: none; padding: 0 17px 0 3px; color: #000; }
.combo b { position: absolute; right: 0; top: 0; bottom: 0; width: 17px; display: grid; place-items: center; background: linear-gradient(150deg, #3478c0, #7db4e6 50%, #bfe0fb); border: 1px solid #5c92cc; pointer-events: none; }

/* tool bar */
.bar { flex: none; height: 47px; display: flex; background: linear-gradient(#cfcfcf, #e0e0e0 20%, #d6d6d6); border-bottom: 1px solid #b4b4b4; }
.bar i { width: 2px; height: 38px; background: linear-gradient(90deg, #aaa 50%, #fff 50%); }
.bar-left { width: 633px; display: flex; align-items: center; }
.menu { display: flex; align-items: center; padding-left: 9px; }
.menu svg:first-child { margin-right: 3px; }
.menu svg:last-child { margin: 0 6px 0 4px; }
.filter { width: 147px; height: 22px; margin: 0 10px 0 12px; }
.scope { width: 70px; height: 22px; }
.scope select { padding: 0; }
.icons { flex: 1; display: flex; align-items: center; }
.icons > svg { margin: 0 5px 0 4px; }
.icons svg.cr { margin: 0 3px; }
.icons .on { width: 33px; height: 30px; display: grid; place-items: center; background: #fff; border: 1px solid #666; border-radius: 2px; }
.quad { display: grid; grid-template: 22px 22px / 26px 26px; place-items: center; margin-right: 5px; }
.quad.wide { grid-template-columns: 25px 12px 25px 12px; }
.icons i { margin-right: 7px; }
.icons svg.last { margin: 26px 6px 0 auto; }

/* resource rail */
.work { flex: 1; min-height: 0; display: flex; }
.rail { flex: none; width: 31px; display: flex; flex-direction: column; align-items: flex-end; gap: 2px; background: linear-gradient(90deg, #aaa, #b5b5b5 80%, #8a8a8a); overflow: hidden; }
.gear { margin: 7px 8px 20px; }
.rail > button { flex: none; width: 27px; height: 40px; display: grid; place-items: center; background: #dcdcdc; border: 1px solid #6e6e6e; border-right: 0; border-radius: 4px 0 0 4px; box-shadow: inset 1px 1px #f6f6f6; }
.rail > .cur { width: 29px; height: 43px; margin: -1px 0; background: #ebebeb; }
.rail > .gap { margin-top: 12px; }
.rail > .cut { height: 34px; border-bottom: 2px solid #777; }
.pager { width: 23px; }
.pager button { width: 15px; height: 15px; margin-bottom: 1px; display: grid; place-items: center; background: #e2e2e2; border: 1px solid #eee; border-right-color: #777; border-bottom-color: #777; }

/* navigator */
.navp { flex: none; width: 250px; display: flex; flex-direction: column; padding: 4px 11px 3px 7px; background: #e9e9e9; border-top: 2px solid #999; border-bottom: 1px solid #777; }
.navhead { display: flex; align-items: center; justify-content: space-between; height: 17px; padding: 0 4px 0 5px; margin: 0 0 7px; }
.navhead h2 { font-weight: 700; color: #111; }
.navbox { flex: 1; min-height: 0; display: flex; flex-direction: column; border: 1px solid #777; background: #fff; padding: 1px; }
.navgrid { flex: 1; min-height: 0; overflow: hidden; background: linear-gradient(#000, #000) 199px 20px / 1px 100% no-repeat, repeating-linear-gradient(#f6f6f6 0, #f6f6f6 19px, #e4e4e4 19px, #e4e4e4 20px, #fff 20px, #fff 39px, #e4e4e4 39px, #e4e4e4 40px); }
table { border-collapse: collapse; table-layout: fixed; width: 100%; }
th { font-weight: 400; text-align: left; padding: 0 0 0 6px; height: 20px; background: linear-gradient(#f8f8f8, #e8eaec 50%, #d4d7da); border-bottom: 1px solid #777; border-right: 1px solid #aaa; white-space: nowrap; overflow: hidden; }
td { padding: 0 0 0 3px; height: 20px; }
.navgrid th:first-child { width: 200px; }
.navgrid th:last-child, .lbox th:last-child { border-right: 0; }
.navgrid th:last-child { padding-left: 4px; }
.navgrid td:last-child { padding-left: 8px; }
.navgrid .in { padding-left: 20px; background: linear-gradient(#999, #999) 9px 0 / 1px 20px no-repeat, linear-gradient(#999, #999) 9px 10px / 10px 1px no-repeat; }
.in div { display: flex; align-items: center; gap: 1px; height: 16px; white-space: nowrap; }
.in svg:last-child { margin-right: 2px; }
.hl td { background: #3399ff; color: #fff; }
.navgrid .hl td:last-child { border-left: 1px solid #000; }
.navgrid .hl .in { background: linear-gradient(#999, #999) 9px 0 / 1px 10px no-repeat, linear-gradient(#999, #999) 9px 10px / 10px 1px no-repeat, linear-gradient(90deg, #fff 51px, #3399ff 51px); }
.hscroll { height: 17px; display: flex; align-items: center; background: #ececec; padding: 0 7px; }
.hscroll svg:last-child { margin-left: auto; }
.hscroll span { margin-left: 8px; width: 50px; height: 15px; font-size: 8px; line-height: 13px; text-align: center; background: linear-gradient(#f6f6f6, #ddd 50%, #c6c8ca); border: 1px solid #8a8a8a; border-radius: 2px; }
.split { height: 12px; display: grid; place-items: center; background: linear-gradient(#bbb, #bbb) 0 5px / 100% 1px no-repeat; }
.split i { width: 42px; height: 6px; background: #ddd; border: 1px solid #aaa; box-shadow: -5px 0 #e9e9e9, 5px 0 #e9e9e9; }
.acc { height: 22px; margin-bottom: 1px; flex: none; display: flex; justify-content: space-between; align-items: center; padding: 0 5px 0 6px; color: #14145a; background: linear-gradient(90deg, transparent 208px, #aaa 208px, #aaa 209px, transparent 209px), linear-gradient(#fbfbfb, #e8eaec 50%, #d6d9dc); border-bottom: 1px solid #888; border-right: 1px solid #999; }

/* graphics view */
.view { flex: 1; min-width: 0; display: flex; flex-direction: column; }
.strip { height: 22px; background: #ebebeb; border-bottom: 2px solid #666; }
.canvas { position: relative; flex: 1; min-height: 0; border-bottom: 1px solid #888; }
.scene { width: 100%; height: 100%; }
.ax { font: 14px/1 "Liberation Sans", sans-serif; }
.tip { position: absolute; left: 599px; top: 466px; padding: 2px 4px 2px 3px; line-height: 16px; border-radius: 4px; background: rgba(240,240,235,.82); border: 1px solid rgba(255,255,255,.7); box-shadow: 3px 3px 3px rgba(60,60,50,.6); white-space: nowrap; }

/* dialog */
.dialog { position: absolute; left: 281px; top: 0; bottom: 31px; width: 345px; display: flex; flex-direction: column; background: #ebebeb; border: 1px solid #777; border-width: 0 1px 0 2px; border-bottom: 7px solid #1a1a1a; border-radius: 6px; z-index: 2; overflow: hidden; }
.dtitle { height: 22px; flex: none; display: flex; align-items: center; color: #fff; background: linear-gradient(#111 0, #777 3px, #555 9px, #1a1a1a 10px); }
.dtitle h2 { flex: 1; border-left: 1px solid #ddd; height: 20px; line-height: 20px; padding-left: 4px; }
.dtitle button { width: 20px; height: 22px; display: grid; place-items: center; border-left: 1px solid #ddd; }
.dbody { flex: 1; min-height: 0; display: flex; flex-direction: column; padding: 4px 6px 0 5px; }
.dscroll { flex: 1; min-height: 0; display: flex; overflow: hidden; }
.sects { flex: 1; border-right: 1px solid #888; }
h3 { display: flex; align-items: center; justify-content: space-between; height: 23px; padding-left: 6px; color: #14145a; background: linear-gradient(#fff, #eceef0 50%, #d8dbde); border-bottom: 2px solid #888; }
h3 span { width: 23px; height: 100%; display: grid; place-items: center; border-left: 1px solid #aaa; }
.sect { background: #d2d2d2; padding: 5px 10px 10px 7px; border-left: 1px solid #999; box-shadow: inset 1px 0 #bbb; color: #111; }
.sect.feat { padding: 6px 10px 9px 7px; }
.sect > div, .sub > div { display: flex; align-items: center; }
.sect label { flex: 1; }
.r25 { height: 25px; } .r26 { height: 26px; } .r27 { height: 27px; } .r32 { height: 32px; } .r34 { height: 34px; } .r35 { height: 35px; } .r44 { height: 44px; }
.sect .sub { display: block; height: 109px; background: #c4c4c4; border: 1px solid #f0f0f0; border-top-color: #888; border-left-color: #888; padding: 0 8px; margin: 1px 0 0; }
h4 { display: flex; justify-content: space-between; align-items: center; height: 22px; color: #14145a; padding-right: 4px; margin-right: -4px; }
.sub .low { margin-top: 3px; }
.low input { appearance: none; width: 16px; height: 16px; margin-right: 2px; border: 1px solid #555; border-radius: 2px; background: linear-gradient(#fff, #ccc); }
.num { width: 81px; height: 22px; border: 1px solid #666; border-radius: 3px; background: #fff; padding: 0 0 0 20px; font: 16px/20px "Liberation Sans", sans-serif; box-shadow: 0 0 0 1px rgba(255,255,255,.5); }
.num.w { padding-left: 11px; }
.off .num { background: #cfcfcf; color: #999; border-color: #999; }
.off label { color: #999; }
.b22, .b30 { flex: none; display: grid; place-items: center; border: 1px solid #555; border-radius: 3px; background: linear-gradient(#fafafa, #dcdcdc 50%, #e8e8e8); box-shadow: inset 0 0 0 1px #fff; }
.b22 { width: 22px; height: 22px; margin-left: 4px; }
.b30 { width: 30px; height: 30px; margin-left: 4px; }
.gold { color: #c8980c; }
.pale { border-color: #999; }
.hot { background: linear-gradient(#ffd0a0, #f88838 60%, #ffc888); box-shadow: none; }
.pick { border-radius: 4px; margin-bottom: 1px; background: linear-gradient(90deg, #e2a468, #dcae80 40%, #d2d2d2 78%); }
.pick svg:first-child, .r34 > svg { margin: 0 5px 0 2px; }
.feat .sub { height: 166px; }
.feat .prev { height: 71px; margin-top: 2px; }
.lst { padding-top: 6px; }
.sub .lst { align-items: flex-start; }
.lbox { width: 254px; height: 100px; border: 1px solid #666; background: #fff; padding: 1px; overflow: hidden; }
.lbox th:nth-child(1) { width: 50px; } .lbox th:nth-child(2) { width: 80px; } .lbox th:nth-child(3) { width: 70px; }
.lbox td { border-right: 1px solid #ddd; padding-left: 5px; }
.lbox td:first-child { padding-left: 3px; }
.lbox td:nth-child(n+3) { padding-left: 8px; }
.lbox th { height: 22px; }
.lbox tr:last-child td { height: 19px; }
.lbox .alt td { background: #f6f6f6; border-bottom: 1px solid #ddd; }
.lbox .hscroll { height: 16px; }
.lbox .hscroll span { width: 113px; margin-left: 7px; }
.ops { display: flex; flex-direction: column; gap: 4px; }
.sub .r44 { padding-top: 2px; }
.vscroll { width: 17px; display: flex; flex-direction: column; align-items: center; padding: 7px 0 6px; background: #ededed; }
.vscroll span { flex: 1; margin: 5px 0 25px; width: 15px; display: grid; place-items: center; background: linear-gradient(90deg, #f8f8f8, #dcdcdc 50%, #b8b8c0); border: 1px solid #999; border-radius: 2px; }
.acts { flex: none; display: flex; justify-content: flex-end; gap: 7px; height: 35px; margin-top: 3px; padding: 4px 10px 0; border-top: 1px solid #aaa; }
.acts button { width: 52px; height: 24px; border: 1px solid #555; border-radius: 3px; color: #111; background: linear-gradient(#fff, #e0e0e0 50%, #ccc 50%, #eee); box-shadow: inset 0 0 0 1px #fff; }
.acts .ok { background: linear-gradient(#c8f0b8, #8cd470 50%, #5cbc40 50%, #a8e890); border-color: #2c6a1c; }

/* status and task bar */
.status { flex: none; display: flex; align-items: center; height: 23px; background: linear-gradient(#e4e4e4, #d0d0d0); color: #111; padding: 0 3px 2px; border-top: 1px solid #fff; }
.status b:first-child { width: 673px; }
.cells { margin-left: auto; display: flex; align-items: center; gap: 4px; padding-right: 14px; }
.cells svg { margin-right: 32px; }
.cells i { width: 1px; height: 20px; background: #fff; }
.taskbar { flex: none; height: 30px; display: flex; align-items: center; border-top: 1px solid #2a2220; color: #fff; background: linear-gradient(rgba(255,255,255,.15), transparent 4px), linear-gradient(90deg, #5a4a42, #65564e 7%, #84756e 32%, #7c6c66 55%, #5a4a44 78%, #3a2c26 88%, #45362f); }
.orb { margin-left: 8px; }
.ie { margin: 0 15px 0 27px; }
.task { display: flex; align-items: center; gap: 5px; width: 159px; height: 28px; padding-left: 9px; margin-right: 2px; border: 1px solid #c9beb8; border-radius: 2px; background: linear-gradient(90deg, rgba(255,255,255,.25), rgba(90,80,76,.3)); white-space: nowrap; }
.act { background: linear-gradient(90deg, rgba(255,255,255,.2), rgba(240,230,220,.55) 60%, rgba(255,255,255,.25)); }
.tray { margin-left: auto; display: flex; align-items: center; gap: 9px; }
.tray .kb { margin-right: 4px; }
.tray time { padding: 0 4px 0 8px; }
.tray i { width: 14px; height: 28px; border: 1px solid #988; background: rgba(255,255,255,.1); }

/* watermark */
.wm { position: absolute; right: 24px; bottom: 12px; display: flex; gap: 8px; pointer-events: none; z-index: 3; }
.wm svg { opacity: .82; }
.wm p { width: 179px; color: rgba(255,255,255,.55); white-space: nowrap; padding-top: 9px; }
.wm strong { display: block; font: 900 41px/42px "Noto Sans CJK SC", sans-serif; }
.wm span { display: block; font: 19px/22px "Liberation Sans", sans-serif; }
```
